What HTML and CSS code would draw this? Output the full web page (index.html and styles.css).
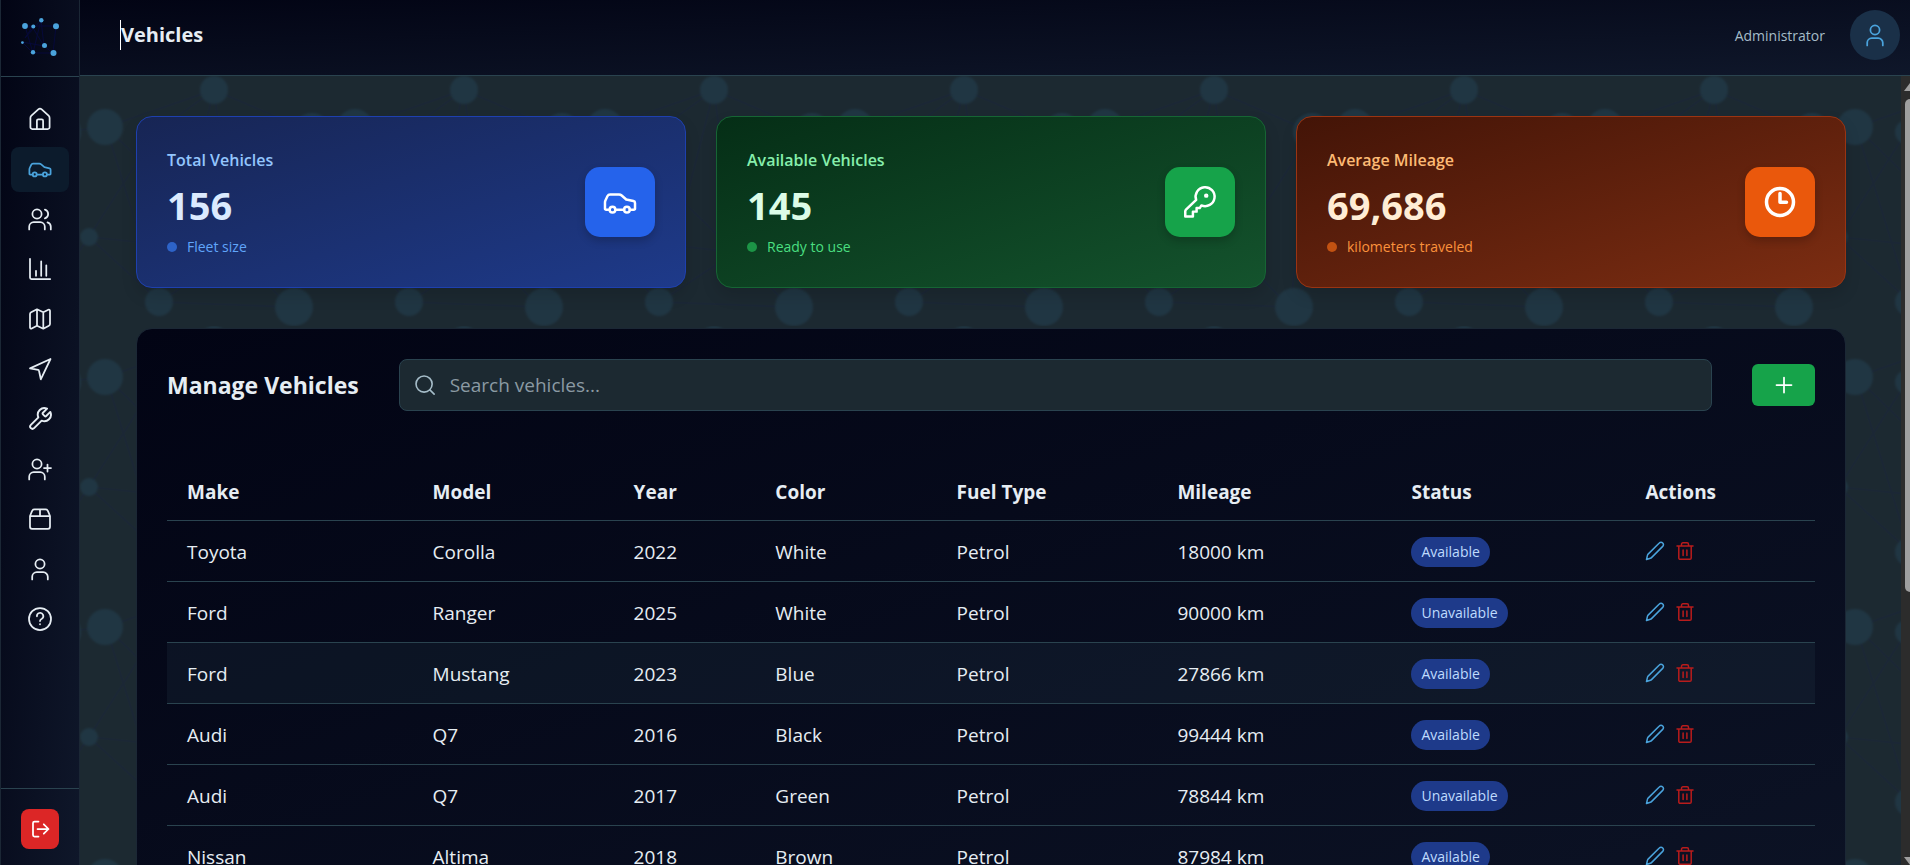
FILE: index.html
```html
<!DOCTYPE html>
<html lang="en">
<head>
<meta charset="utf-8">
<title>Vehicles</title>
<link rel="stylesheet" href="styles.css">
</head>
<body>
<svg class="sprite" aria-hidden="true">
  <symbol id="i-home" viewBox="0 0 24 24"><path d="M2.4 10.9a3 3 0 0 1 1-2.2l6.900-6.300a2.500 2.500 0 0 1 3.400 0l6.900 6.300a3 3 0 0 1 1 2.200v9.300a1.800 1.800 0 0 1-1.800 1.800H4.200a1.800 1.800 0 0 1-1.800-1.800zM8.900 22v-8.300a1.400 1.400 0 0 1 1.400-1.400h3.400a1.400 1.400 0 0 1 1.400 1.400V22"/></symbol>
  <symbol id="i-car" viewBox="0 -1 24 24"><path d="M4.700 16.500H2.200a.8.8 0 0 1-.8-.8V11.500c0-.6.1-1 .3-1.500l1.500-3.200a2 2 0 0 1 1.800-1.100h6.300a3 3 0 0 1 1.900.7l3.200 2.800 5.100 1.100a1.400 1.400 0 0 1 1.100 1.400v4a.8.8 0 0 1-.8.800h-2.900M8.700 16.500h6.200"/><circle cx="6.700" cy="16.400" r="2"/><circle cx="16.900" cy="16.400" r="2"/></symbol>
  <symbol id="i-users" viewBox="0 0 24 24"><circle cx="9" cy="7" r="4.600"/><path d="M1.200 22.400v-2.600a4.600 4.600 0 0 1 4.600-4.600h6.400a4.600 4.600 0 0 1 4.600 4.600v2.600M16.900 2.600a4.600 4.600 0 0 1 0 8.800M22.800 22.400v-2.600a4.600 4.600 0 0 0-3.300-4.400"/></symbol>
  <symbol id="i-chart" viewBox="0 0 24 24"><path d="M2 1.800v18.700a1.500 1.500 0 0 0 1.500 1.500h18.700M8 13.800v5M13.200 4.300v14.500M18.300 8.300v10.500"/></symbol>
  <symbol id="i-map" viewBox="0 0 24 24"><path d="M2 7a2 2 0 0 1 1.100-1.700L9 2.300l6.300 3 5-2.500a1.200 1.200 0 0 1 1.700 1v13.200a2 2 0 0 1-1.100 1.700l-5.600 3-6.300-3-5.300 2.800a1.200 1.200 0 0 1-1.700-1zM9 2.300v16.400M15.300 5.300v16.400"/></symbol>
  <symbol id="i-send" viewBox="0 0 24 24"><path d="M22.500 2L12.800 22.300 11 13.700a1 1 0 0 0-.8-.8L2 11.400z"/></symbol>
  <symbol id="i-wrench" viewBox="1 1 22 22"><path d="M14.700 6.300a1 1 0 0 0 0 1.400l1.600 1.600a1 1 0 0 0 1.400 0l3.770-3.770a6 6 0 0 1-7.940 7.940l-6.910 6.910a2.120 2.120 0 0 1-3-3l6.910-6.910a6 6 0 0 1 7.940-7.940l-3.760 3.760z"/></symbol>
  <symbol id="i-user-plus" viewBox="0 0 24 24"><circle cx="9" cy="7" r="4.600"/><path d="M1.200 22.400v-2.600a4.600 4.600 0 0 1 4.600-4.600h6.400a4.600 4.600 0 0 1 4.600 4.600v2.600M19.500 7.500v7M16 11h7"/></symbol>
  <symbol id="i-box" viewBox="0 0 24 24"><path d="M2 9v10.800a2 2 0 0 0 2 2h16a2 2 0 0 0 2-2V9l-2-4.900a2.800 2.800 0 0 0-2.600-1.700H6.600A2.800 2.800 0 0 0 4 4.100zM2 9h20M12 2.400V9"/></symbol>
  <symbol id="i-user" viewBox="0 0 24 24"><circle cx="12" cy="7" r="4.600"/><path d="M4.200 22.400v-2.600a4.600 4.600 0 0 1 4.600-4.600h6.400a4.600 4.600 0 0 1 4.600 4.600v2.600"/></symbol>
  <symbol id="i-help" viewBox="0 0 24 24"><circle cx="12" cy="12" r="11"/><path d="M8.900 9.300a3.200 3.200 0 1 1 4.900 2.500c-1.200.7-1.800 1.200-1.800 2.200"/><path d="M12 17.200v.1"/></symbol>
  <symbol id="i-logout" viewBox="0 0 20 20"><path d="M8.500 2.500h-4A1.500 1.500 0 0 0 3 4v12a1.500 1.500 0 0 0 1.500 1.500h4M7.500 10h11M13.800 5.300l4.700 4.700-4.700 4.700"/></symbol>
  <symbol id="i-key" viewBox="0 0 24 24"><path d="M9.300 10.500A6.700 6.700 0 1 1 13 14.400l-1.200 1.900H9.600v2.500H7v3.400H1.600v-3.600c0-.5.2-.9.500-1.200z"/><circle cx="16.400" cy="7.500" r=".7"/></symbol>
  <symbol id="i-clock" viewBox="0 0 32 32"><circle cx="16" cy="16" r="13.500"/><path d="M16 7.500V16.300h6.500"/></symbol>
  <symbol id="i-search" viewBox="0 0 24 24"><circle cx="11" cy="11" r="8.800"/><path d="M17.300 17.300l4.700 4.700"/></symbol>
  <symbol id="i-plus" viewBox="0 0 24 24"><path d="M12 4.500v15M4.500 12h15"/></symbol>
  <symbol id="i-pencil" viewBox="0 0 20 20"><path d="M1.500 18.500l1-4.300c.1-.4.300-.8.600-1.100L14.300 2a2.300 2.300 0 0 1 3.400 0c.9 1 .9 2.400 0 3.400L6.500 16.600c-.3.300-.7.500-1.100.600z"/></symbol>
  <symbol id="i-trash" viewBox="0 0 20 20"><path d="M2 5h16M6.500 5V3.200c0-.8.600-1.400 1.400-1.400h4.200c.8 0 1.400.6 1.400 1.400V5M3.800 5v12a1.300 1.300 0 0 0 1.300 1.300h9.800a1.300 1.300 0 0 0 1.300-1.300V5M8.100 9v5.500M11.900 9v5.500"/></symbol>
</svg>

<div class="app">
  <aside class="sidebar">
    <div class="brand">
      <svg class="brand-mark" viewBox="0 0 40 40" role="img" aria-label="Fleet">
        <path class="brand-links" d="M5 9h31L33 36H13L5 9l8 2 11 18-3-26-8 33L2 25l22 4 9 7M13 9l-8 12 16-18"/>
        <circle cx="5" cy="9" r="2.900"/><circle cx="13.300" cy="9.500" r="2"/><circle cx="21.300" cy="3.200" r="2.200"/><circle cx="36" cy="9.300" r="3"/>
        <circle cx="2.400" cy="25.600" r="1.400"/><circle cx="13" cy="35.200" r="2.200"/><circle cx="24.500" cy="28.400" r="2.500"/><circle cx="33.500" cy="36" r="3"/>
      </svg>
    </div>
    <nav class="nav" aria-label="Main">
      <a class="nav-link" href="#" aria-label="Home"><svg class="icon"><use href="#i-home"/></svg></a>
      <a class="nav-link nav-link-active" href="#" aria-label="Vehicles"><svg class="icon"><use href="#i-car"/></svg></a>
      <a class="nav-link" href="#" aria-label="Drivers"><svg class="icon"><use href="#i-users"/></svg></a>
      <a class="nav-link" href="#" aria-label="Reports"><svg class="icon"><use href="#i-chart"/></svg></a>
      <a class="nav-link" href="#" aria-label="Map"><svg class="icon"><use href="#i-map"/></svg></a>
      <a class="nav-link" href="#" aria-label="Trips"><svg class="icon"><use href="#i-send"/></svg></a>
      <a class="nav-link" href="#" aria-label="Maintenance"><svg class="icon"><use href="#i-wrench"/></svg></a>
      <a class="nav-link" href="#" aria-label="Add user"><svg class="icon"><use href="#i-user-plus"/></svg></a>
      <a class="nav-link" href="#" aria-label="Inventory"><svg class="icon"><use href="#i-box"/></svg></a>
      <a class="nav-link" href="#" aria-label="Account"><svg class="icon"><use href="#i-user"/></svg></a>
      <a class="nav-link" href="#" aria-label="Help"><svg class="icon"><use href="#i-help"/></svg></a>
    </nav>
    <div class="sidebar-foot">
      <button class="logout" type="button" aria-label="Log out"><svg class="icon"><use href="#i-logout"/></svg></button>
    </div>
  </aside>

  <div class="page">
    <header class="topbar">
      <h1 class="page-title">Vehicles</h1>
      <div class="account">
        <span class="role">Administrator</span>
        <button class="avatar" type="button" aria-label="Profile"><svg class="icon"><use href="#i-user"/></svg></button>
      </div>
    </header>

    <div class="viewport">
      <main class="content">
        <svg class="backdrop" aria-hidden="true">
          <defs>
            <pattern id="network" x="1" width="250" height="250" patternUnits="userSpaceOnUse">
              <g class="network-links">
                <path d="M25 51L133 14 76 55 8 161l71 65 75-50-21-162 98 42-77 120 55 55-130-5L25 51l129 125L8 161M133 14L79 226M231 56l-22 175M231 56l44-5M209 231l49-70M-19 56l44-5M-41 231l49-70"/>
              </g>
              <g class="network-nodes">
                <circle cx="24" cy="51" r="18"/><circle cx="133" cy="14" r="14"/><circle cx="76" cy="56" r="12"/><circle cx="231" cy="56" r="19"/><circle cx="-19" cy="56" r="19"/>
                <circle cx="8" cy="161" r="9"/><circle cx="258" cy="161" r="9"/><circle cx="78" cy="226" r="14"/><circle cx="154" cy="176" r="15"/><circle cx="213" cy="231" r="19"/>
              </g>
            </pattern>
          </defs>
          <rect width="100%" height="100%" fill="url(#network)"/>
        </svg>

        <section class="stats" aria-label="Fleet summary">
          <article class="stat stat-blue">
            <div class="stat-text">
              <h2 class="stat-label">Total Vehicles</h2>
              <p class="stat-value">156</p>
              <p class="stat-note">Fleet size</p>
            </div>
            <span class="stat-icon"><svg class="icon"><use href="#i-car"/></svg></span>
          </article>
          <article class="stat stat-green">
            <div class="stat-text">
              <h2 class="stat-label">Available Vehicles</h2>
              <p class="stat-value">145</p>
              <p class="stat-note">Ready to use</p>
            </div>
            <span class="stat-icon"><svg class="icon"><use href="#i-key"/></svg></span>
          </article>
          <article class="stat stat-orange">
            <div class="stat-text">
              <h2 class="stat-label">Average Mileage</h2>
              <p class="stat-value">69,686</p>
              <p class="stat-note">kilometers traveled</p>
            </div>
            <span class="stat-icon stat-icon-bold"><svg class="icon"><use href="#i-clock"/></svg></span>
          </article>
        </section>

        <section class="panel">
          <div class="panel-head">
            <h2 class="panel-title">Manage Vehicles</h2>
            <label class="search">
              <svg class="icon"><use href="#i-search"/></svg>
              <input class="search-input" type="search" placeholder="Search vehicles..." aria-label="Search vehicles">
            </label>
            <button class="add" type="button" aria-label="Add vehicle"><svg class="icon"><use href="#i-plus"/></svg></button>
          </div>
          <table class="vehicles">
            <colgroup><col class="c-make"><col class="c-model"><col class="c-year"><col class="c-color"><col class="c-fuel"><col class="c-mileage"><col class="c-status"><col class="c-actions"></colgroup>
            <thead>
              <tr><th scope="col">Make</th><th scope="col">Model</th><th scope="col">Year</th><th scope="col">Color</th><th scope="col">Fuel Type</th><th scope="col">Mileage</th><th scope="col">Status</th><th scope="col">Actions</th></tr>
            </thead>
            <tbody>
              <tr><td>Toyota</td><td>Corolla</td><td>2022</td><td>White</td><td>Petrol</td><td>18000 km</td><td><span class="badge">Available</span></td><td><div class="actions"><button class="edit" type="button" aria-label="Edit"><svg class="icon"><use href="#i-pencil"/></svg></button><button class="delete" type="button" aria-label="Delete"><svg class="icon"><use href="#i-trash"/></svg></button></div></td></tr>
              <tr><td>Ford</td><td>Ranger</td><td>2025</td><td>White</td><td>Petrol</td><td>90000 km</td><td><span class="badge">Unavailable</span></td><td><div class="actions"><button class="edit" type="button" aria-label="Edit"><svg class="icon"><use href="#i-pencil"/></svg></button><button class="delete" type="button" aria-label="Delete"><svg class="icon"><use href="#i-trash"/></svg></button></div></td></tr>
              <tr class="row-hover"><td>Ford</td><td>Mustang</td><td>2023</td><td>Blue</td><td>Petrol</td><td>27866 km</td><td><span class="badge">Available</span></td><td><div class="actions"><button class="edit" type="button" aria-label="Edit"><svg class="icon"><use href="#i-pencil"/></svg></button><button class="delete" type="button" aria-label="Delete"><svg class="icon"><use href="#i-trash"/></svg></button></div></td></tr>
              <tr><td>Audi</td><td>Q7</td><td>2016</td><td>Black</td><td>Petrol</td><td>99444 km</td><td><span class="badge">Available</span></td><td><div class="actions"><button class="edit" type="button" aria-label="Edit"><svg class="icon"><use href="#i-pencil"/></svg></button><button class="delete" type="button" aria-label="Delete"><svg class="icon"><use href="#i-trash"/></svg></button></div></td></tr>
              <tr><td>Audi</td><td>Q7</td><td>2017</td><td>Green</td><td>Petrol</td><td>78844 km</td><td><span class="badge">Unavailable</span></td><td><div class="actions"><button class="edit" type="button" aria-label="Edit"><svg class="icon"><use href="#i-pencil"/></svg></button><button class="delete" type="button" aria-label="Delete"><svg class="icon"><use href="#i-trash"/></svg></button></div></td></tr>
              <tr><td>Nissan</td><td>Altima</td><td>2018</td><td>Brown</td><td>Petrol</td><td>87984 km</td><td><span class="badge">Available</span></td><td><div class="actions"><button class="edit" type="button" aria-label="Edit"><svg class="icon"><use href="#i-pencil"/></svg></button><button class="delete" type="button" aria-label="Delete"><svg class="icon"><use href="#i-trash"/></svg></button></div></td></tr>
            </tbody>
          </table>
        </section>
      </main>
      <div class="scroll-track" aria-hidden="true">
        <span class="scroll-arrow scroll-arrow-up"></span>
        <span class="scroll-thumb"></span>
        <span class="scroll-arrow scroll-arrow-down"></span>
      </div>
    </div>
  </div>
</div>
</body>
</html>
```
FILE: styles.css
```css
* { box-sizing: border-box; }

body {
  margin: 0;
  background: #1c2931;
  color: #e6edf3;
  font-family: "Open Sans", "Noto Sans", sans-serif;
}

h1, h2, p { margin: 0; }

button {
  border: 0;
  padding: 0;
  background: none;
  cursor: pointer;
  display: flex;
  align-items: center;
  justify-content: center;
}

.sprite { display: none; }

.icon {
  display: block;
  width: 24px;
  height: 24px;
  fill: none;
  stroke: currentColor;
  stroke-width: 1.75;
  stroke-linecap: round;
  stroke-linejoin: round;
}

.app { display: flex; height: 100vh; overflow: hidden; }

/* Sidebar */
.sidebar {
  flex: none;
  width: 80px;
  display: flex;
  flex-direction: column;
  border-left: 1px solid #1b2735;
  border-right: 1px solid #1b2735;
  background: linear-gradient(to bottom right, #020414, #0f172a);
}

.brand {
  height: 77px;
  display: flex;
  align-items: center;
  justify-content: center;
  padding-bottom: 2px;
  border-bottom: 1px solid #2a434f;
}

.brand-mark { width: 40px; height: 40px; fill: #4aa3dc; overflow: visible; }
.brand-links { fill: none; stroke: #06093a; stroke-width: 1; }

.nav {
  flex: 1;
  display: flex;
  flex-direction: column;
  gap: 5px;
  padding: 20px 10px;
}

.nav-link {
  height: 45px;
  display: flex;
  align-items: center;
  justify-content: center;
  padding-bottom: 2px;
  border-radius: 8px;
  color: #e6edf3;
}

.nav-link-active { background: #0c1b2c; color: #4aa3dc; }

.sidebar-foot {
  display: flex;
  justify-content: center;
  padding: 20px 0 16px;
  border-top: 1px solid #2a434f;
}

.logout {
  width: 38px;
  height: 40px;
  border-radius: 8px;
  background: #dc2626;
  color: #fff;
}

.logout .icon { width: 20px; height: 20px; }

/* Top bar */
.page { flex: 1; min-width: 0; display: flex; flex-direction: column; }

.topbar {
  flex: none;
  height: 76px;
  display: flex;
  align-items: center;
  justify-content: space-between;
  padding: 0 10px 5px 40px;
  border-bottom: 1px solid #2a434f;
  background: linear-gradient(to bottom right, #020414, #0f172a);
}

.page-title {
  border-left: 1px solid #fff;
  font-size: 20px;
  font-weight: 700;
  line-height: 30px;
}

.account { display: flex; align-items: center; gap: 25px; }
.role { color: #a5bcc8; font-size: 14px; line-height: 20px; padding-top: 2px; }

.avatar {
  width: 50px;
  height: 50px;
  border-radius: 50%;
  background: #1a3048;
  color: #4aa3dc;
}

/* Scrolling area */
.viewport { flex: 1; min-height: 0; display: flex; }

.content {
  position: relative;
  flex: 1;
  min-width: 0;
  overflow: hidden;
  display: flex;
  flex-direction: column;
  gap: 40px;
  padding: 40px 55px 0 56px;
}

.backdrop { position: absolute; inset: 0; width: 100%; height: 100%; }
.network-nodes { fill: #203643; filter: blur(1px); }
.network-links { fill: none; stroke: #1b2735; stroke-width: 2; }

.scroll-track {
  flex: none;
  width: 9px;
  display: flex;
  flex-direction: column;
  align-items: flex-end;
  overflow: hidden;
  padding: 7px 0 0;
  background: #2c2c2c;
}

.scroll-arrow { width: 6px; height: 8px; background: #9f9f9f; }
.scroll-arrow-up { clip-path: polygon(0 100%, 100% 0, 100% 100%); }
.scroll-arrow-down { margin-top: auto; clip-path: polygon(0 0, 100% 0, 100% 100%); }

.scroll-thumb {
  width: 5px;
  height: 63%;
  margin-top: 8px;
  border-radius: 5px 0 0 5px;
  background: #9f9f9f;
}

/* Summary cards */
.stats {
  position: relative;
  display: grid;
  grid-template-columns: repeat(3, 1fr);
  gap: 30px;
}

.stat {
  display: flex;
  align-items: center;
  justify-content: space-between;
  padding: 30px;
  border: 1px solid var(--edge);
  border-radius: 16px;
  background: linear-gradient(to bottom right, var(--from), var(--to));
  box-shadow: 0 8px 16px rgba(0, 0, 0, .12);
}

.stat-blue { --from: #172554; --to: #1e3a8a; --edge: #1e40af; --label: #93c5fd; --value: #dbeafe; --note: #60a5fa; --accent: #2563eb; --dot: #2d63c8; }
.stat-green { --from: #052e16; --to: #14532d; --edge: #166534; --label: #86efac; --value: #dcfce7; --note: #4ade80; --accent: #16a34a; --dot: #1c9446; }
.stat-orange { --from: #431407; --to: #7c2d12; --edge: #9a3412; --label: #fdba74; --value: #ffedd5; --note: #fb923c; --accent: #ea580c; --dot: #c25212; }

.stat-label { color: var(--label); font-size: 16px; font-weight: 600; line-height: 26px; }
.stat-value { margin: 12px 0; color: var(--value); font-size: 38px; font-weight: 700; line-height: 40px; }

.stat-note {
  display: flex;
  align-items: center;
  gap: 10px;
  color: var(--note);
  font-size: 14px;
  line-height: 20px;
}

.stat-note::before {
  content: "";
  width: 10px;
  height: 10px;
  border-radius: 50%;
  background: var(--dot);
}

.stat-icon {
  width: 70px;
  height: 70px;
  display: flex;
  align-items: center;
  justify-content: center;
  border-radius: 15px;
  background: var(--accent);
  color: #fff;
  box-shadow: 0 4px 8px rgba(0, 0, 0, .2);
}

.stat-icon .icon { width: 34px; height: 34px; }
.stat-icon-bold .icon { width: 32px; height: 32px; stroke-width: 3.5; }

/* Vehicle table */
.panel {
  position: relative;
  flex: 1 0 auto;
  padding: 30px;
  border: 1px solid #1b2735;
  border-radius: 16px;
  background: linear-gradient(to bottom right, #020414, #0f172a 130%);
}

.panel-head { display: flex; align-items: center; gap: 40px; margin-bottom: 53px; }
.panel-title { font-size: 23px; font-weight: 700; line-height: 32px; }

.search {
  flex: 1;
  display: flex;
  align-items: center;
  gap: 14px;
  height: 52px;
  padding: 0 14px;
  border: 1px solid #2a434f;
  border-radius: 8px;
  background: #1c2931;
  color: #a5bcc8;
}

.search .icon { flex: none; width: 22px; height: 22px; }

.search-input {
  flex: 1;
  min-width: 0;
  border: 0;
  padding: 0;
  outline: 0;
  background: none;
  color: #e6edf3;
  font: 19px/26px "Open Sans", "Noto Sans", sans-serif;
}

.search-input::placeholder { color: #8b9aa3; opacity: 1; }

.add {
  width: 63px;
  height: 42px;
  border-radius: 6px;
  background: #16a34a;
  color: #fff;
}

.vehicles { width: 100%; table-layout: fixed; border-collapse: collapse; }
.c-make { width: 15%; }
.c-model { width: 12%; }
.c-year { width: 9%; }
.c-color { width: 11%; }
.c-fuel { width: 13%; }
.c-mileage { width: 14%; }
.c-status { width: 14%; }
.c-actions { width: 12%; }

.vehicles th, .vehicles td {
  border-bottom: 1px solid #2a434f;
  text-align: left;
  font-size: 19px;
  line-height: 28px;
}

.vehicles th { height: 56px; padding: 0 20px; font-weight: 700; }
.vehicles td { height: 61px; padding: 2px 20px 0; }
.row-hover { background: rgba(42, 67, 79, .2); }

.c-make { width: 14.900%; }
.c-model { width: 12.200%; }
.c-year { width: 8.600%; }
.c-fuel { width: 13.400%; }
.c-mileage { width: 14.200%; }
.c-status { width: 14.200%; }
.c-actions { width: 11.500%; }

.badge {
  display: inline-block;
  vertical-align: middle;
  padding: 0 10px;
  border-radius: 15px;
  background: #1e3a8a;
  color: #bfdbfe;
  font-size: 14px;
  line-height: 30px;
}

.actions { display: flex; gap: 10px; padding-bottom: 2px; }
.actions .icon { width: 20px; height: 20px; stroke-width: 1.5; }
.edit { color: #4aa3dc; }
.delete { color: #b91c1c; }
```
